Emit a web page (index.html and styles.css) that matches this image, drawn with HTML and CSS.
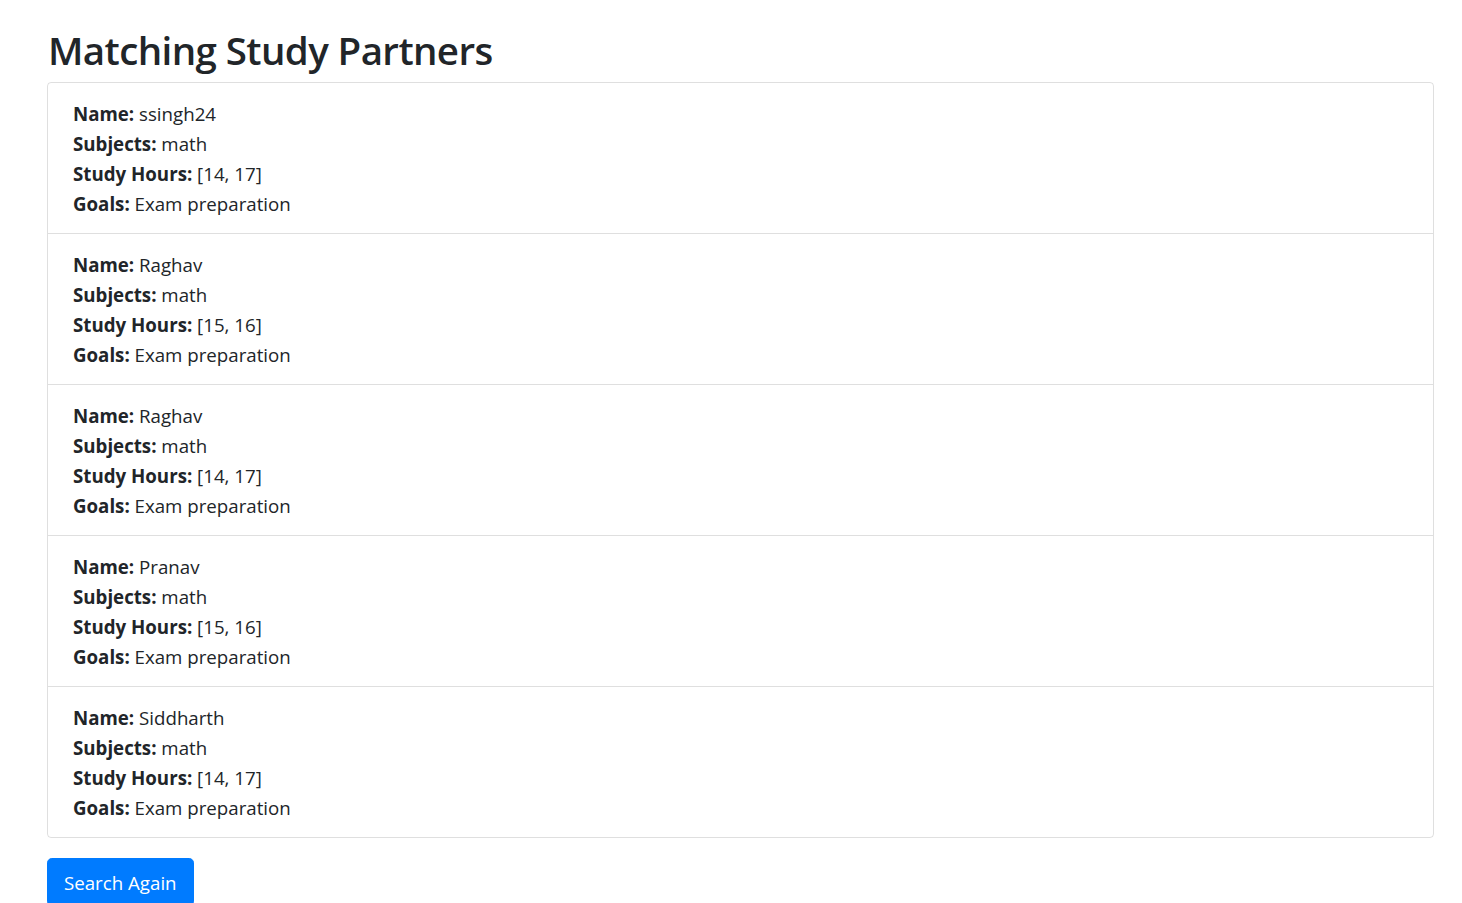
FILE: index.html
```html
<!DOCTYPE html>
<html lang="en">
<head>
<meta charset="utf-8">
<title>Matching Study Partners</title>
<link rel="stylesheet" href="styles.css">
</head>
<body>
<main class="page">
  <h1 class="title">Matching Study Partners</h1>
  <ul class="partners">
    <li class="partner">
      <div><strong>Name:</strong> ssingh24</div>
      <div><strong>Subjects:</strong> math</div>
      <div><strong>Study Hours:</strong> [14, 17]</div>
      <div><strong>Goals:</strong> Exam preparation</div>
    </li>
    <li class="partner">
      <div><strong>Name:</strong> Raghav</div>
      <div><strong>Subjects:</strong> math</div>
      <div><strong>Study Hours:</strong> [15, 16]</div>
      <div><strong>Goals:</strong> Exam preparation</div>
    </li>
    <li class="partner">
      <div><strong>Name:</strong> Raghav</div>
      <div><strong>Subjects:</strong> math</div>
      <div><strong>Study Hours:</strong> [14, 17]</div>
      <div><strong>Goals:</strong> Exam preparation</div>
    </li>
    <li class="partner">
      <div><strong>Name:</strong> Pranav</div>
      <div><strong>Subjects:</strong> math</div>
      <div><strong>Study Hours:</strong> [15, 16]</div>
      <div><strong>Goals:</strong> Exam preparation</div>
    </li>
    <li class="partner">
      <div><strong>Name:</strong> Siddharth</div>
      <div><strong>Subjects:</strong> math</div>
      <div><strong>Study Hours:</strong> [14, 17]</div>
      <div><strong>Goals:</strong> Exam preparation</div>
    </li>
  </ul>
  <a class="btn-search" href="#">Search Again</a>
</main>
</body>
</html>
```

FILE: styles.css
```css
html {
  overflow: hidden;
}
body {
  margin: 0;
  font-family: "Open Sans", "Noto Sans", "Liberation Sans", sans-serif;
  color: #212529;
  background: #fff;
  font-size: 16px;
  line-height: 1.5;
}
.page {
  padding: 26px 28px 0 47px;
}
.title {
  margin: 0 0 8px 1px;
  height: 48px;
  font-size: 38.5px;
  font-weight: 600;
  line-height: 48px;
  letter-spacing: -0.6px;
}
.partners {
  list-style: none;
  margin: 0;
  padding: 0;
  border: 1px solid rgba(0, 0, 0, 0.125);
  border-radius: 4px;
}
.partner {
  padding: 15px 25px;
  font-size: 18.7px;
  line-height: 30px;
}
.partner div {
  position: relative;
  top: 1px;
}
.partner + .partner {
  border-top: 1px solid rgba(0, 0, 0, 0.125);
}
.partner strong {
  font-weight: 700;
}
.btn-search {
  display: inline-block;
  margin-top: 20px;
  padding: 9px 16px 7px;
  font-size: 18.7px;
  line-height: 30px;
  color: #fff;
  background: #007bff;
  border: 1px solid #007bff;
  border-radius: 4.8px;
  text-decoration: none;
}
```
